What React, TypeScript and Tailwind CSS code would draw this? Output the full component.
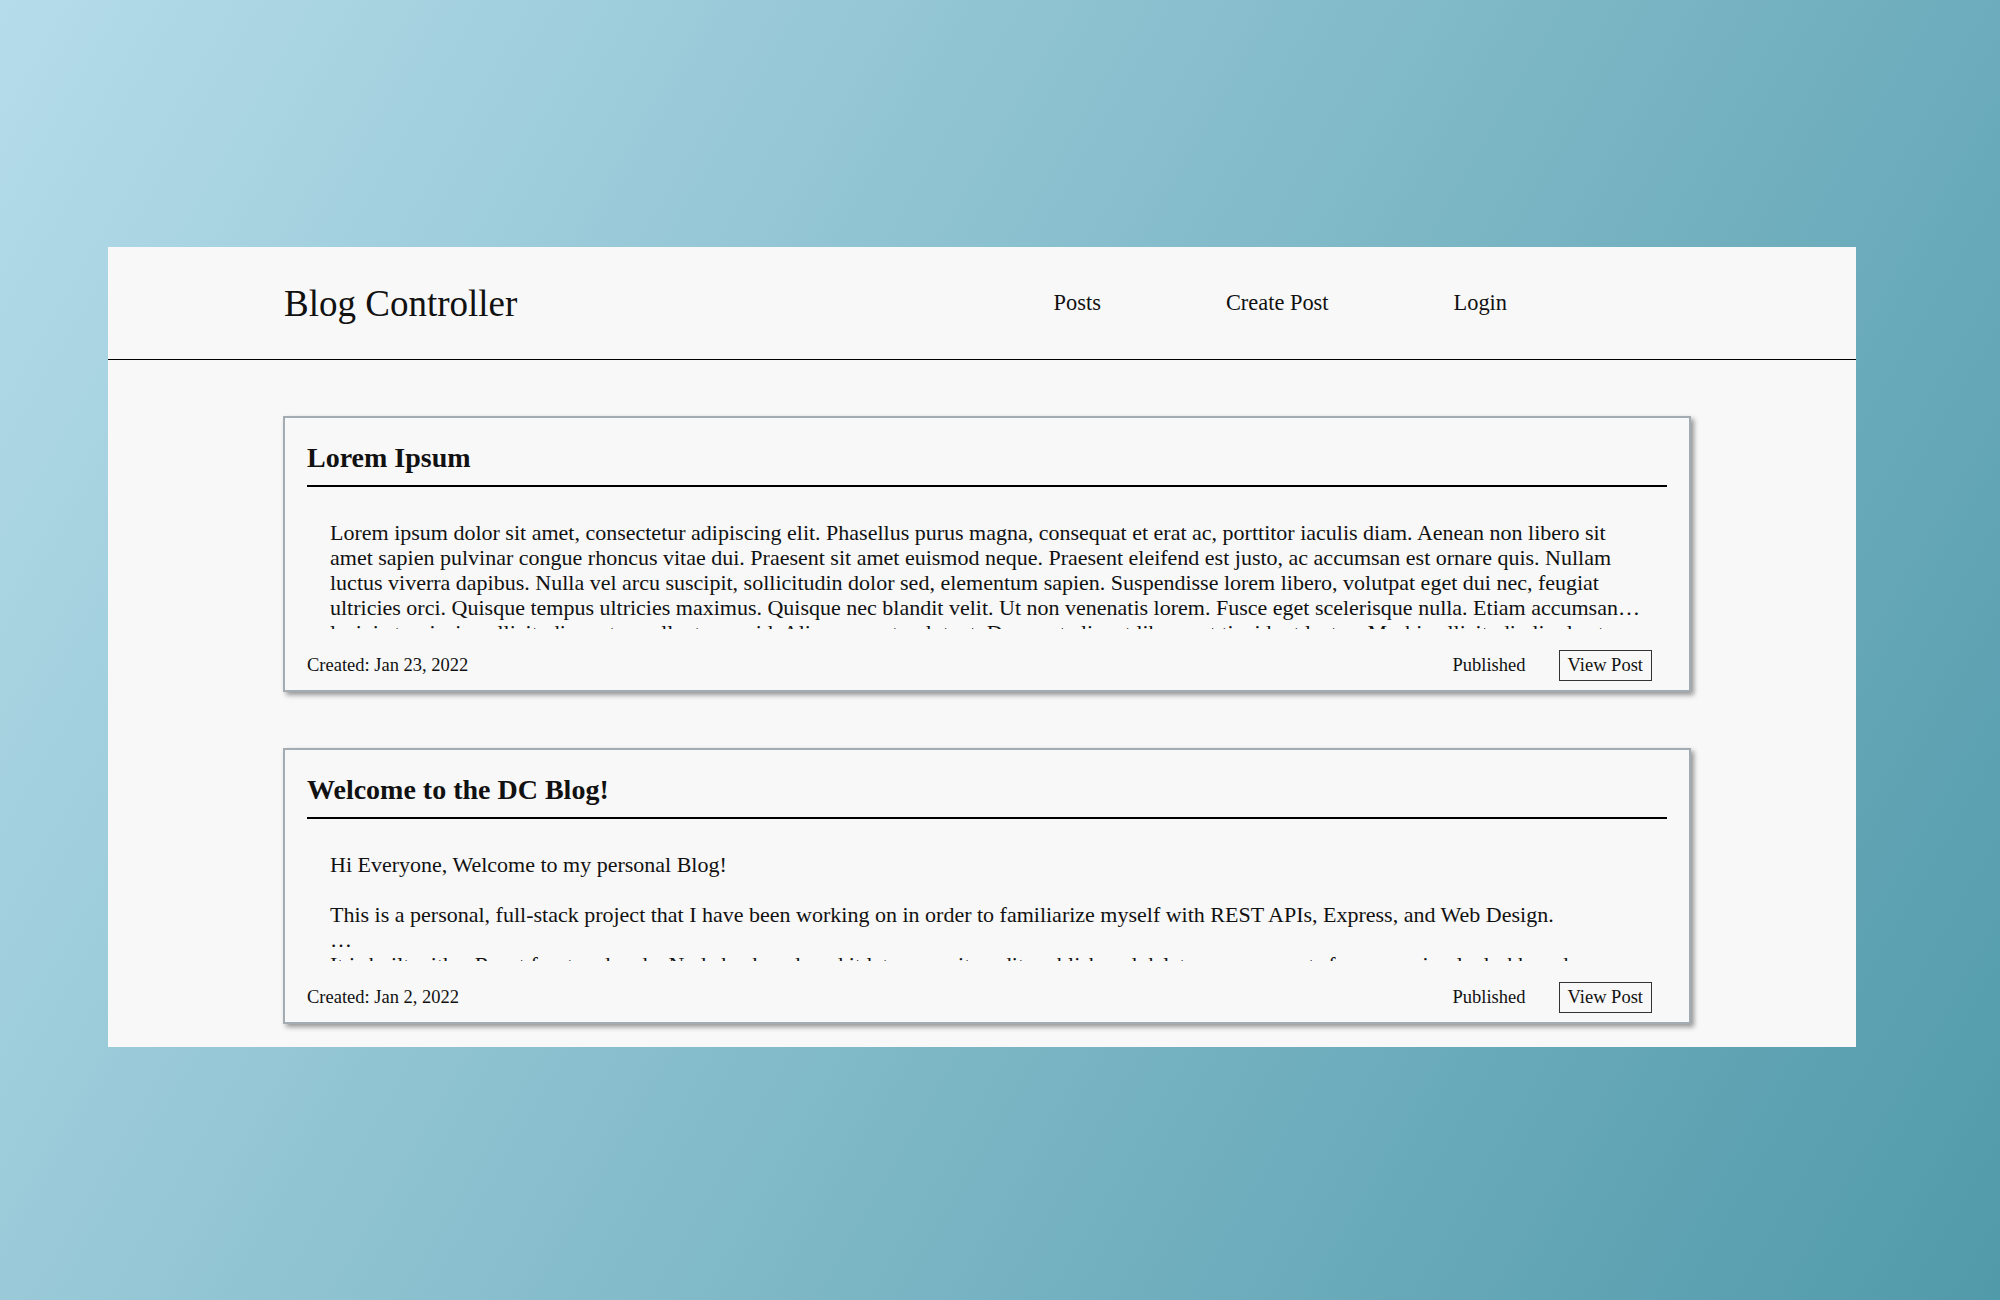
import React from "react";

const loremClamped =
  "Lorem ipsum dolor sit amet, consectetur adipiscing elit. Phasellus purus magna, consequat et erat ac, porttitor iaculis diam. Aenean non libero sit amet sapien pulvinar congue rhoncus vitae dui. Praesent sit amet euismod neque. Praesent eleifend est justo, ac accumsan est ornare quis. Nullam luctus viverra dapibus. Nulla vel arcu suscipit, sollicitudin dolor sed, elementum sapien. Suspendisse lorem libero, volutpat eget dui nec, feugiat ultricies orci. Quisque tempus ultricies maximus. Quisque nec blandit velit. Ut non venenatis lorem. Fusce eget scelerisque nulla. Etiam accumsan lacinia turpis, in sollicitudin metus pellentesque id.";

const loremRest =
  "lacinia turpis, in sollicitudin metus pellentesque id. Aliquam erat volutpat. Donec at aliquet libero, ut tincidunt lectus. Morbi sollicitudin ligula at lorem finibus, vel dictum nulla pulvinar. Sed felis lorem, blandit et lectus id.";

function Footer({ created }: { created: string }) {
  return (
    <div className="mt-[21px] pb-[9px] flex items-center justify-between pr-[15px] text-[18.5px]">
      <span>Created: {created}</span>
      <div className="flex items-center gap-[33px]">
        <span>Published</span>
        <button className="h-[31px] px-[8px] border border-[#333] bg-[#f8f8f8] text-[18.5px] leading-none">
          View Post
        </button>
      </div>
    </div>
  );
}

function Card({ children }: { children: React.ReactNode }) {
  return (
    <div className="w-[1408px] border-2 border-[#a3abb3] bg-[#f8f8f8] px-[22px] pt-[24px] shadow-[3px_3px_5px_rgba(0,0,0,0.4)]">
      {children}
    </div>
  );
}

export default function App() {
  return (
    <div
      className="w-[2000px] h-[1300px] bg-[linear-gradient(120deg,#b5dcea,#519aaa)] pt-[247px] pl-[108px] text-[#111]"
      style={{ fontFamily: '"Liberation Serif", "Times New Roman", serif' }}
    >
      <div className="w-[1748px] h-[800px] bg-[#f8f8f8] flex flex-col">
        <header className="h-[113px] border-b border-black flex items-center justify-between pl-[176px] pr-[349px]">
          <div className="text-[37px] leading-none">Blog Controller</div>
          <nav className="flex items-center gap-[125px] text-[22.4px]">
            <a>Posts</a>
            <a>Create Post</a>
            <a>Login</a>
          </nav>
        </header>
        <main className="pl-[175px] pt-[56px] flex flex-col gap-[56px]">
          <Card>
            <h2 className="text-[28px] font-bold leading-[32px] pb-[11px] border-b-2 border-black">
              Lorem Ipsum
            </h2>
            <div className="mt-[33px] h-[109px] overflow-hidden px-[23px] text-[22px] leading-[25px]">
              <p className="line-clamp-4">{loremClamped}</p>
              <p>{loremRest}</p>
            </div>
            <Footer created="Jan 23, 2022" />
          </Card>
          <Card>
            <h2 className="text-[28px] font-bold leading-[32px] pb-[11px] border-b-2 border-black">
              Welcome to the DC Blog!
            </h2>
            <div className="mt-[33px] h-[109px] overflow-hidden px-[23px] text-[22px] leading-[25px]">
              <p>Hi Everyone, Welcome to my personal Blog!</p>
              <p className="mt-[25px]">
                This is a personal, full-stack project that I have been working on in order to familiarize myself with REST APIs, Express, and Web Design.
              </p>
              <p>…</p>
              <p>
                It is built with a React front end and a Node back end, and it lets me write, edit, publish and delete my own posts from one simple dashboard page.
              </p>
            </div>
            <Footer created="Jan 2, 2022" />
          </Card>
        </main>
      </div>
    </div>
  );
}
